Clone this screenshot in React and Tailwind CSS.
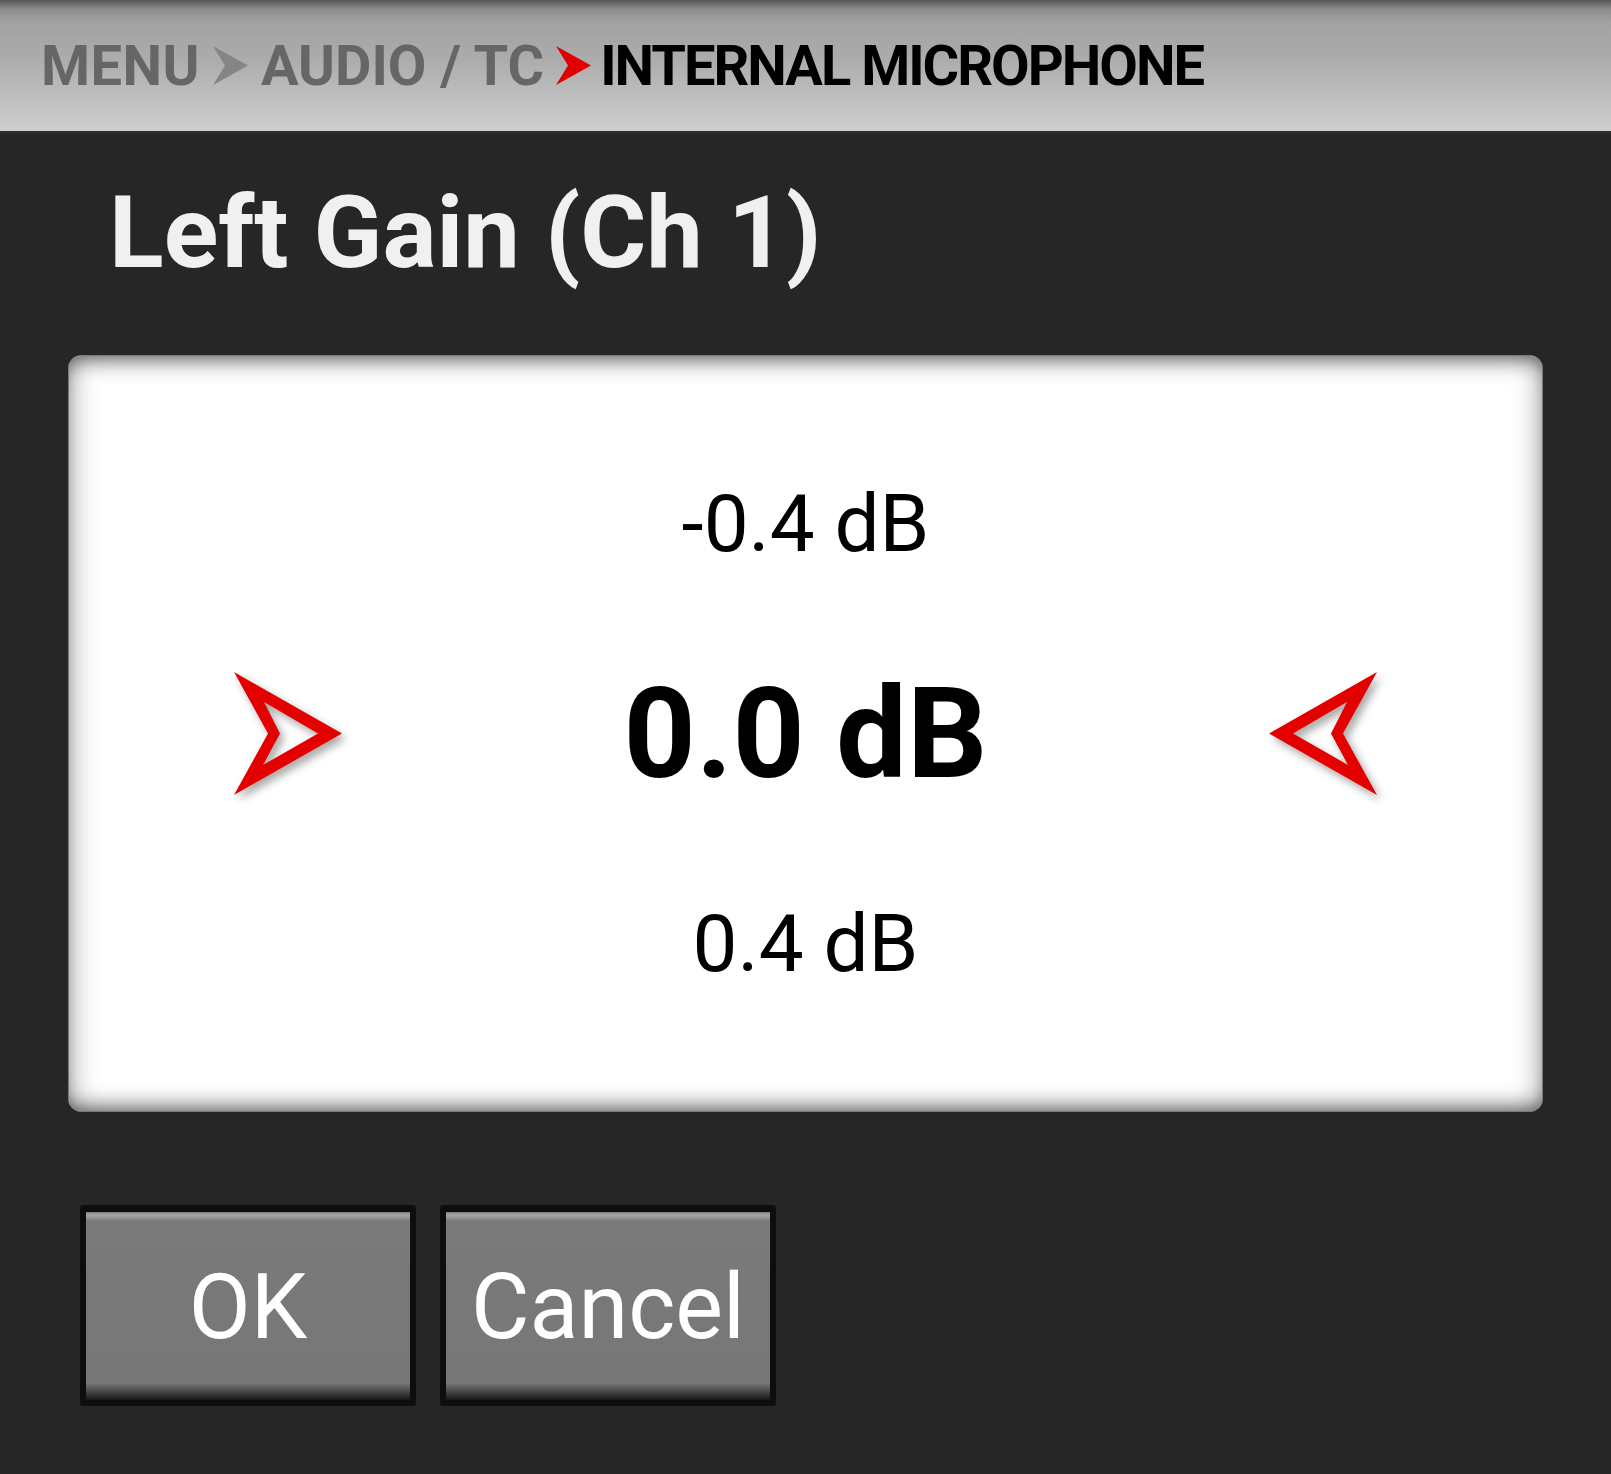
import React from "react";

function Chevron({ color }) {
  return (
    <svg width="35" height="39" viewBox="0 0 35 39" className="shrink-0">
      <path d="M0 0 L35 19.5 L0 39 L12 19.5 Z" fill={color} />
    </svg>
  );
}

function ArrowRight() {
  return (
    <div className="drop-shadow-[4px_5px_4px_rgba(0,0,0,0.35)] shrink-0">
      <svg width="108" height="123" viewBox="0 0 108 123">
        <path
          fillRule="evenodd"
          d="M0 0 L108 61.5 L0 123 L34 61.5 Z M30 30 L46 61.5 L29 93 L84 61.5 Z"
          fill="#e50000"
        />
      </svg>
    </div>
  );
}

function ArrowLeft() {
  return (
    <div className="drop-shadow-[4px_5px_4px_rgba(0,0,0,0.35)] shrink-0">
      <svg width="108" height="123" viewBox="0 0 108 123">
        <path
          fillRule="evenodd"
          d="M108 0 L0 61.5 L108 123 L74 61.5 Z M78 30 L62 61.5 L79 93 L24 61.5 Z"
          fill="#e50000"
        />
      </svg>
    </div>
  );
}

function Button({ children }) {
  return (
    <div className="w-[336px] h-[201px] bg-[#0e0e0e] rounded-[3px] pt-[7px] px-[6px] pb-[6px]">
      <div className="h-full bg-[linear-gradient(to_bottom,#7a7a7a_0px,#a8a8a8_3px,#7a7a7a_9px,#777777_91%,#161616_100%)] flex items-center justify-center pt-[4px] text-white text-[90px] leading-none">
        {children}
      </div>
    </div>
  );
}

export default function App() {
  return (
    <div className="w-full h-[1474px] bg-[#262626] font-[family-name:Roboto,sans-serif] overflow-hidden">
      <div className="h-[133px] border-b-2 border-[#303030] bg-[linear-gradient(to_bottom,#575757_0%,#8c8c8c_7%,#a2a2a2_17%,#acacac_45%,#cecece_100%)] flex items-center px-[41px] text-[56px] font-bold leading-none">
        <span className="text-[#666666] tracking-[0.5px]">MENU</span>
        <span className="ml-[13px] mr-[13px]">
          <Chevron color="#858585" />
        </span>
        <span className="text-[#666666]">AUDIO / TC</span>
        <span className="ml-[12px] mr-[9px]">
          <Chevron color="#e00000" />
        </span>
        <span className="text-black tracking-[-2px]">INTERNAL MICROPHONE</span>
      </div>

      <div className="px-[68px]">
        <div className="mt-[49px] ml-[41px] text-[101px] font-bold leading-none text-[#f0f0f0]">
          Left Gain (Ch 1)
        </div>

        <div className="mt-[72px] h-[757px] bg-white rounded-[13px] border border-[#7a7a7a] shadow-[inset_0_0_28px_rgba(0,0,0,0.45),inset_0_14px_18px_-12px_rgba(0,0,0,0.45),inset_0_-14px_18px_-12px_rgba(0,0,0,0.45)] flex items-center justify-between px-[165px]">
          <ArrowRight />
          <div className="flex flex-col items-center gap-[107px] text-black leading-none">
            <div className="text-[80px]">-0.4 dB</div>
            <div className="text-[126px] font-bold">0.0 dB</div>
            <div className="text-[80px]">0.4 dB</div>
          </div>
          <ArrowLeft />
        </div>

        <div className="mt-[93px] ml-[12px] flex gap-[24px]">
          <Button>OK</Button>
          <Button>Cancel</Button>
        </div>
      </div>
    </div>
  );
}
